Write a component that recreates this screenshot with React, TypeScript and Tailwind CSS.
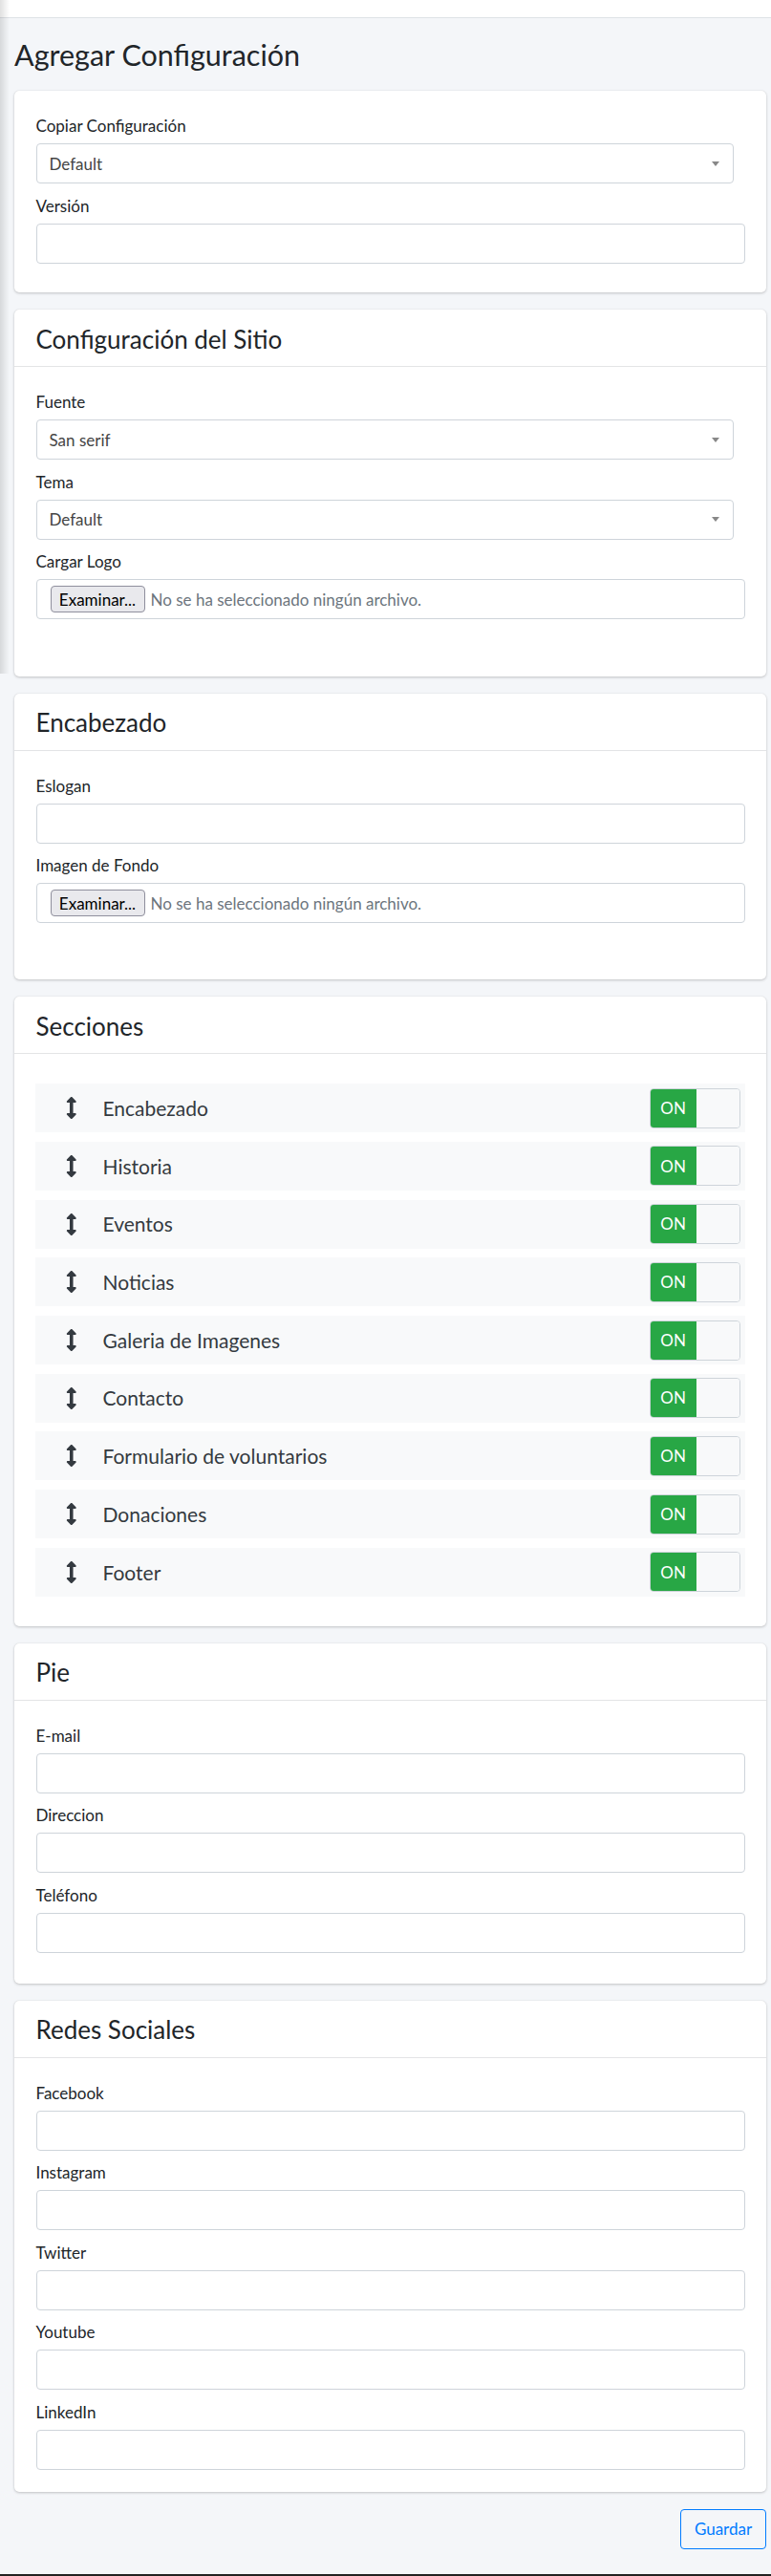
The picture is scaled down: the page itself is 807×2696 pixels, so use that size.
import React from "react";
import { FaArrowsAltV } from "react-icons/fa";

const secciones = [
  "Encabezado",
  "Historia",
  "Eventos",
  "Noticias",
  "Galeria de Imagenes",
  "Contacto",
  "Formulario de voluntarios",
  "Donaciones",
  "Footer",
];

function Label({ children }: { children: React.ReactNode }) {
  return <label className="mb-[6px] block h-[24px] text-[17px] leading-[24px] text-[#212529]">{children}</label>;
}

function TextInput() {
  return <input type="text" className="block h-[42px] w-full rounded-[4px] border border-[#ced4da] bg-white outline-none" />;
}

function FakeSelect({ value }: { value: string }) {
  return (
    <div className="flex h-[42px] w-[730px] items-center justify-between rounded-[4px] border border-[#ced4da] bg-white pl-[13px] pr-[14px]">
      <span className="text-[17px] text-[#444]">{value}</span>
      <span className="h-0 w-0 border-x-[4px] border-t-[5px] border-x-transparent border-t-[#888]" />
    </div>
  );
}

function FileInput() {
  return (
    <div className="flex h-[42px] w-full items-center rounded-[4px] border border-[#ced4da] bg-white pl-[14px]">
      <span className="flex h-[28px] w-[99px] items-center justify-center rounded-[4px] border border-[#8f8f9d] bg-[#e9e9ed] text-[17px] text-black">
        Examinar...
      </span>
      <span className="ml-[6px] text-[17px] text-[#6c757d]">No se ha seleccionado ningún archivo.</span>
    </div>
  );
}

function Field({ label, children }: { label: string; children?: React.ReactNode }) {
  return (
    <div>
      <Label>{label}</Label>
      {children ?? <TextInput />}
    </div>
  );
}

function Card({ title, bodyClass, children }: { title?: string; bodyClass: string; children: React.ReactNode }) {
  return (
    <section className="mb-[18px] rounded-[5px] bg-white shadow-[0_0_1px_rgba(0,0,0,0.125),0_1px_3px_rgba(0,0,0,0.2)]">
      {title ? (
        <div className="h-[60px] border-b border-[#e3e4e6] px-[22.5px] pt-[17.7px]">
          <h3 className="text-[26px] leading-[26px] text-[#212529]">{title}</h3>
        </div>
      ) : null}
      <div className={`flex flex-col gap-[11.5px] px-[22.5px] ${bodyClass}`}>{children}</div>
    </section>
  );
}

function Toggle() {
  return (
    <div className="flex h-[42px] w-[95px] overflow-hidden rounded-[4px] border border-[#ced4da]">
      <span className="flex w-[48px] items-center justify-center bg-[#28a745] text-[17px] text-white">ON</span>
      <span className="flex-1 bg-[#f8f9fa]" />
    </div>
  );
}

export default function App() {
  return (
    <div className="relative min-h-[2696px] bg-[#f4f6f9] font-['Lato',sans-serif] text-[#212529]">
      <div className="pointer-events-none absolute left-0 top-0 h-[705px] w-[10px] bg-gradient-to-r from-[rgba(0,0,0,0.12)] to-transparent" />
      <div className="h-[19px] border-b border-[#dee2e6] bg-white" />
      <div className="pl-[15px] pr-[5px]">
        <h1 className="mb-[23px] mt-[22.8px] text-[30.5px] leading-[30.5px] text-[#212529]">Agregar Configuración</h1>

        <Card bodyClass="pt-[25px] pb-[30.5px]">
          <Field label="Copiar Configuración">
            <FakeSelect value="Default" />
          </Field>
          <Field label="Versión" />
        </Card>

        <Card title="Configuración del Sitio" bodyClass="pt-[25px] pb-[59.5px]">
          <Field label="Fuente">
            <FakeSelect value="San serif" />
          </Field>
          <Field label="Tema">
            <FakeSelect value="Default" />
          </Field>
          <Field label="Cargar Logo">
            <FileInput />
          </Field>
        </Card>

        <Card title="Encabezado" bodyClass="pt-[25px] pb-[59px]">
          <Field label="Eslogan" />
          <Field label="Imagen de Fondo">
            <FileInput />
          </Field>
        </Card>

        <section className="mb-[18px] rounded-[5px] bg-white shadow-[0_0_1px_rgba(0,0,0,0.125),0_1px_3px_rgba(0,0,0,0.2)]">
          <div className="h-[60px] border-b border-[#e3e4e6] px-[22.5px] pt-[17.7px]">
            <h3 className="text-[26px] leading-[26px] text-[#212529]">Secciones</h3>
          </div>
          <ul className="flex flex-col gap-[9.7px] px-[22px] pb-[31px] pt-[31px]">
            {secciones.map((s) => (
              <li key={s} className="flex h-[51px] items-center bg-[#f8f9fa] pl-[32px] pr-[5.4px]">
                <FaArrowsAltV className="h-[23px] w-[11.5px] text-[#343a40]" />
                <span className="ml-[27px] text-[21px] text-[#343a40]">{s}</span>
                <div className="ml-auto">
                  <Toggle />
                </div>
              </li>
            ))}
          </ul>
        </section>

        <Card title="Pie" bodyClass="pt-[25px] pb-[32px]">
          <Field label="E-mail" />
          <Field label="Direccion" />
          <Field label="Teléfono" />
        </Card>

        <Card title="Redes Sociales" bodyClass="pt-[25px] pb-[23px]">
          <Field label="Facebook" />
          <Field label="Instagram" />
          <Field label="Twitter" />
          <Field label="Youtube" />
          <Field label="LinkedIn" />
        </Card>

        <div className="flex justify-end">
          <button className="h-[42px] w-[90px] rounded-[4px] border border-[#007bff] text-[17px] text-[#007bff]">Guardar</button>
        </div>
      </div>
      <div className="mt-[26px] h-[2px] bg-[#222]" />
    </div>
  );
}
